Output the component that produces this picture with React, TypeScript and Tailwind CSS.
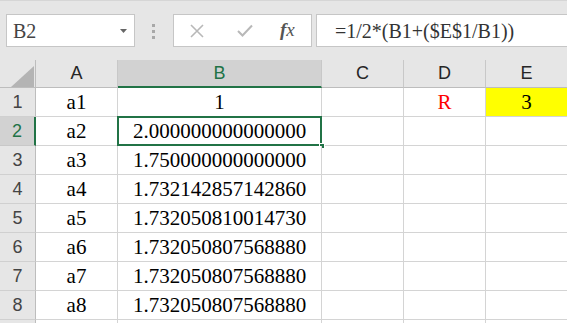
import React from "react";

const serif = "font-['Liberation_Serif','Times_New_Roman',serif]";
const sans = "font-['Liberation_Sans','Arial',sans-serif]";

const rows: { a: string; b: string }[] = [
  { a: "a1", b: "1" },
  { a: "a2", b: "2.000000000000000" },
  { a: "a3", b: "1.750000000000000" },
  { a: "a4", b: "1.732142857142860" },
  { a: "a5", b: "1.732050810014730" },
  { a: "a6", b: "1.732050807568880" },
  { a: "a7", b: "1.732050807568880" },
  { a: "a8", b: "1.732050807568880" },
  { a: "", b: "" },
];

const cols = ["A", "B", "C", "D", "E"];

const Toolbar = () => (
  <div className="flex h-[60px] items-start border-t border-[#d6d6d6] pt-[13px]">
    <div className="relative ml-[6px] flex h-[33px] w-[129px] items-center border border-[#c6c6c6] bg-white pl-[6px]">
      <span className={`${serif} text-[20px] text-[#444]`}>B2</span>
      <svg className="absolute right-[7px] top-[14px]" width="7" height="4" viewBox="0 0 7 4">
        <path d="M0 0h7L3.5 4z" fill="#666" />
      </svg>
    </div>
    <div className="ml-[17px] mt-[10px] flex flex-col gap-[3px]">
      <span className="h-[3px] w-[3px] bg-[#a8a8a8]" />
      <span className="h-[3px] w-[3px] bg-[#a8a8a8]" />
      <span className="h-[3px] w-[3px] bg-[#a8a8a8]" />
    </div>
    <div className="ml-[18px] flex h-[33px] w-[139px] items-center border border-[#c6c6c6] bg-white">
      <svg className="ml-[16px]" width="14" height="14" viewBox="0 0 14 14">
        <path d="M1 1l12 12M13 1L1 13" stroke="#b8b8b8" strokeWidth="1.6" fill="none" />
      </svg>
      <svg className="ml-[33px]" width="16" height="13" viewBox="0 0 16 13">
        <path d="M1 7l4.5 4.5L15 1.5" stroke="#b8b8b8" strokeWidth="2" fill="none" />
      </svg>
      <span className={`${serif} ml-[27px] text-[19px] italic text-[#555]`}>
        <span className="font-bold">f</span>x
      </span>
    </div>
    <div className="ml-[4px] flex h-[33px] flex-1 items-center border border-r-0 border-[#c6c6c6] bg-white pl-[18px]">
      <span className={`${serif} text-[20px] text-[#333]`}>=1/2*(B1+($E$1/B1))</span>
    </div>
  </div>
);

export default function App() {
  return (
    <div className="h-[323px] w-[567px] overflow-hidden bg-[#e6e6e6]">
      <Toolbar />
      <div className="grid grid-cols-[36px_82px_204px_82px_82px_82px] grid-rows-[28px_29px_29px_29px_29px_29px_29px_29px_29px_29px]">
        <div className="relative border-b border-r border-[#bdbdbd] bg-[#e6e6e6]">
          <svg className="absolute left-[11px] top-[6px]" width="23" height="21" viewBox="0 0 23 21">
            <path d="M23 0V21H0z" fill="#b4b4b4" />
          </svg>
        </div>
        {cols.map((c) => (
          <div
            key={c}
            className={`${sans} flex items-center justify-center text-[18px] ${
              c === "B"
                ? "border-b-2 border-r border-b-[#217346] border-r-[#c8c8c8] bg-[#d2d2d2] text-[#217346]"
                : "border-b border-r border-[#c8c8c8] border-b-[#bdbdbd] bg-[#e6e6e6] text-[#262626]"
            }`}
          >
            {c}
          </div>
        ))}
        {rows.map((r, i) => {
          const n = i + 1;
          const sel = n === 2;
          return (
            <React.Fragment key={n}>
              <div
                className={`${sans} flex items-center justify-center border-b text-[18px] ${
                  sel
                    ? "border-r-2 border-b-[#c8c8c8] border-r-[#217346] bg-[#d2d2d2] text-[#217346]"
                    : "border-r border-b-[#d0d0d0] border-r-[#bdbdbd] bg-[#e6e6e6] text-[#444]"
                }`}
              >
                {n <= 8 ? n : ""}
              </div>
              <div className={`${serif} flex items-center justify-center border-b border-r border-[#d4d4d4] bg-white pt-[2px] text-[21px] text-black`}>
                {r.a}
              </div>
              <div className={`${serif} relative flex items-center justify-center border-b border-r border-[#d4d4d4] bg-white pt-[2px] text-[21px] text-black`}>
                {r.b}
                {sel && (
                  <>
                    <div className="absolute -bottom-[1px] -left-[1px] -right-[1px] -top-[1px] border-2 border-[#217346]" />
                    <div className="absolute -bottom-[4px] -right-[4px] h-[6px] w-[6px] border border-white bg-[#217346]" />
                  </>
                )}
              </div>
              <div className="border-b border-r border-[#d4d4d4] bg-white" />
              <div className={`${serif} flex items-center justify-center border-b border-r border-[#d4d4d4] bg-white pt-[2px] text-[21px] text-[#ff0000]`}>
                {n === 1 ? "R" : ""}
              </div>
              <div
                className={`${serif} flex items-center justify-center border-b border-r border-[#d4d4d4] pt-[2px] text-[21px] text-black ${
                  n === 1 ? "bg-[#ffff00]" : "bg-white"
                }`}
              >
                {n === 1 ? "3" : ""}
              </div>
            </React.Fragment>
          );
        })}
      </div>
    </div>
  );
}
